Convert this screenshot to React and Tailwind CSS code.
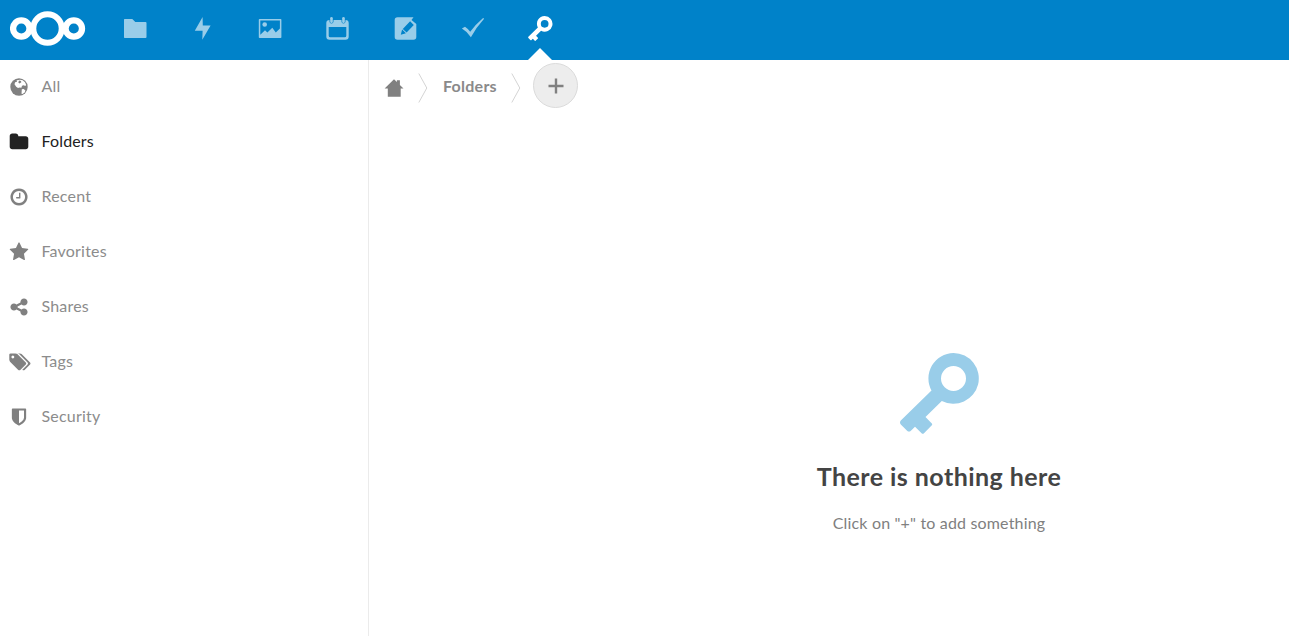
import React, { useState } from "react";

// Top bar icons, drawn on a 24x24 grid
const FolderIcon = () => (
  <svg viewBox="0 0 24 24" className="size-6" fill="currentColor">
    <path d="M1.5 3h7.8l3 3H22.600q.9 0 .9.9V21.100q0 .9-.9.9H1.500q-.5 0-.5-.9V3.900q0-.9.5-.9z" />
  </svg>
);

const BoltIcon = () => (
  <svg viewBox="0 0 24 24" className="size-6" fill="currentColor">
    <path d="M11.600 1 3.800 14.800h7.800l-.3 9 8.300-14.300h-7.800z" />
  </svg>
);

const PhotoIcon = () => (
  <svg viewBox="0 0 24 24" className="size-6" fill="currentColor">
    <path
      fillRule="evenodd"
      d="M1.600 3h21q.8 0 .8.8v17.400q0 .8-.8.8h-21q-.8 0-.8-.8V3.800q0-.8.8-.8zM2.300 4.500v14.300l4.700-4.600 2.400 2.300 4.900-4.700 3.500 4.600 4.100-4V4.500z"
    />
    <circle cx="6.700" cy="8.500" r="2.300" />
  </svg>
);

const CalendarIcon = () => (
  <svg viewBox="0 0 24 24" className="size-6" fill="currentColor">
    <path
      fillRule="evenodd"
      d="M3.500 4v1.500a2 2 0 0 0 4 0V4h8v1.500a2 2 0 0 0 4 0V4q3.200 0 3.200 3v13.500q0 3.300-3.200 3.300h-16q-3.200 0-3.200-3.300V7q0-3 3.200-3zM2.700 11v8.700q0 1.600 1.600 1.600h14.400q1.600 0 1.600-1.600V11z"
    />
    <rect x="4.200" y="1" width="2.600" height="6" rx="1.300" />
    <rect x="16.200" y="1" width="2.600" height="6" rx="1.300" />
  </svg>
);

const NotesIcon = () => (
  <svg viewBox="0 0 24 24" className="size-6" fill="currentColor">
    <path
      fillRule="evenodd"
      d="M4.500 1.200h16L18.500 4l4.800 4V21q0 2.800-2.800 2.800h-16q-2.800 0-2.800-2.800V4q0-2.800 2.800-2.800zM17.100 5.300l-7.300 7.600 3.800 3.600 7.200-7.600zM9.100 13.600l-1.300 5.200 5.100-1.600z"
    />
  </svg>
);

const CheckIcon = () => (
  <svg viewBox="0 0 24 24" className="size-6" fill="currentColor">
    <path d="M.9 12.600 4 10.800q3.100 2.100 5.200 5 5.500-7.500 12.900-13.800l1 .7Q15 11.600 9.900 21.200q-3.800-5.600-9-8.600z" />
  </svg>
);

const KeyIcon = ({ className }) => (
  <svg viewBox="0 0 80 81" className={className} fill="currentColor">
    <path
      fillRule="evenodd"
      d="M53.500 0a25.400 25.400 0 1 1-11.700 48L25.500 64l6.100 6.200q1.200 1.200 0 2.400L24 80.200q-1.200 1.100-2.400 0L15 73.700l-4.100 4q-1.900 1.700-3.800 0L.8 71.400q-1.600-1.900 0-3.800L31.500 37.500A25.400 25.400 0 0 1 53.500 0zm0 13a12.500 12.500 0 1 0 0 25 12.500 12.500 0 0 0 0-25z"
    />
  </svg>
);

const Logo = () => (
  <svg viewBox="0 0 76 36" className="h-9 w-[76px]" fill="none" stroke="white">
    <circle cx="37.500" cy="18.500" r="14.200" strokeWidth="6" />
    <circle cx="11.300" cy="18.500" r="8.200" strokeWidth="6.300" />
    <circle cx="63.800" cy="18.500" r="8.200" strokeWidth="6.300" />
  </svg>
);

// Sidebar icons, drawn on a 1792 grid
const sidebarPaths = {
  Folders:
    "M1728 608v704q0 92-66 158t-158 66h-1216q-92 0-158-66t-66-158v-960q0-92 66-158t158-66h320q92 0 158 66t66 158v32h672q92 0 158 66t66 158z",
  Recent:
    "M1024 544v448q0 14-9 23t-23 9h-320q-14 0-23-9t-9-23v-64q0-14 9-23t23-9h224v-352q0-14 9-23t23-9h64q14 0 23 9t9 23zm416 352q0-148-73-273t-198-198-273-73-273 73-198 198-73 273 73 273 198 198 273 73 273-73 198-198 73-273zm224 0q0 209-103 385.5t-279.5 279.5-385.5 103-385.5-103-279.5-279.5-103-385.5 103-385.5 279.5-279.5 385.5-103 385.5 103 279.5 279.5 103 385.5z",
  Favorites:
    "M1728 647q0 22-26 48l-363 354 86 500q1 7 1 20 0 21-10.5 35.5t-30.5 14.5q-19 0-40-12l-449-236-449 236q-22 12-40 12-21 0-31.5-14.5t-10.5-35.5q0-6 2-20l86-500-364-354q-25-27-25-48 0-37 56-46l502-73 225-455q19-41 49-41t49 41l225 455 502 73q56 9 56 46z",
  Shares:
    "M1344 1024q133 0 226.5 93.5t93.5 226.5-93.5 226.5-226.5 93.5-226.5-93.5-93.5-226.5q0-12 2-34l-360-180q-92 86-218 86-133 0-226.5-93.5t-93.5-226.5 93.5-226.5 226.5-93.5q126 0 218 86l360-180q-2-22-2-34 0-133 93.5-226.5t226.5-93.5 226.5 93.5 93.5 226.5-93.5 226.5-226.5 93.5q-126 0-218-86l-360 180q2 22 2 34t-2 34l360 180q92-86 218-86z",
  Tags: "M448 448q0-53-37.500-90.500t-90.500-37.500-90.500 37.500-37.500 90.500 37.500 90.500 90.500 37.500 90.500-37.500 37.500-90.500zm1067 576q0 53-37 90l-491 492q-39 37-91 37-53 0-90-37l-715-716q-38-37-64.500-101t-26.500-117v-416q0-52 38-90t90-38h416q53 0 117 26.500t102 64.500l715 714q37 39 37 91zm384 0q0 53-37 90l-491 492q-39 37-91 37-36 0-59-14t-53-45l470-470q37-37 37-90 0-52-37-91l-715-714q-38-38-102-64.500t-117-26.500h224q53 0 117 26.500t102 64.500l715 714q37 39 37 91z",
  Security:
    "M1344 960v-640h-448v1137q119-63 213-137 235-184 235-360zm192-768v768q0 86-33.5 170.5t-83 150-118 127.5-126.5 103-121 77.5-89.5 49.5-42.5 20q-12 6-26 6t-26-6q-16-7-42.5-20t-89.5-49.5-121-77.5-126.5-103-118-127.5-83-150-33.5-170.5v-768q0-26 19-45t45-19h1152q26 0 45 19t19 45z",
};

const SidebarIcon = ({ name }) => {
  if (name === "All") {
    return (
      <svg viewBox="0 0 20 20" className="size-5">
        <circle cx="10" cy="10" r="8.700" fill="currentColor" />
        <path
          fill="white"
          d="M8 3.200 11 2.700l2.600.6 2.400 2 1.200 2.700-1 1-1.500-.7-1.700.5-.6 2-1.700-.3-1.700.6-1.800-1.400-1.700-2.500.6-1.900 2-.6-.6-1zM12.800 12.300l1.800-.2 1.800 1.300-.7 2-2.200 1.500-1-.2z"
        />
        <path fill="currentColor" d="m10 3.600 2 .3.300 1.300-1.700 1.400L9.300 5.500z" />
      </svg>
    );
  }
  if (name === "Tags") {
    return (
      <svg viewBox="0 0 1920 1792" className="h-5 w-[22px] shrink-0" fill="currentColor">
        <path d={sidebarPaths.Tags} />
      </svg>
    );
  }
  return (
    <svg viewBox="0 0 1792 1792" className="size-5" fill="currentColor">
      <path d={sidebarPaths[name]} />
    </svg>
  );
};

const HomeIcon = () => (
  <svg viewBox="0 0 20 20" className="size-5" fill="currentColor">
    <path d="M10 1.200 12.900 4V2.300h3v4.600l3.600 3.600h-2.800v8.200H3.800v-8.200H.6z" />
  </svg>
);

const Separator = () => (
  <svg viewBox="0 0 10 30" className="h-[30px] w-2.5" fill="none" stroke="#d4d4d4">
    <path d="M.8.500 8.800 15 .8 29.500" />
  </svg>
);

const apps = [
  { id: "files", icon: <FolderIcon /> },
  { id: "activity", icon: <BoltIcon /> },
  { id: "photos", icon: <PhotoIcon /> },
  { id: "calendar", icon: <CalendarIcon /> },
  { id: "notes", icon: <NotesIcon /> },
  { id: "tasks", icon: <CheckIcon /> },
  { id: "passwords", icon: <KeyIcon className="h-[25px] w-[25px]" /> },
];

const sections = ["All", "Folders", "Recent", "Favorites", "Shares", "Tags", "Security"];

const App = () => {
  const [active, setActive] = useState("Folders");

  return (
    <div className="flex h-screen flex-col overflow-hidden bg-white font-['Lato',sans-serif] text-[#808080]">
      <header className="flex h-15 shrink-0 items-center bg-[#0082c9] pl-[9.5px]">
        <div className="-mt-1 w-[91.750px]">
          <Logo />
        </div>
        <nav className="flex h-full">
          {apps.map((app) => (
            <button
              key={app.id}
              className={
                app.id === "passwords"
                  ? "relative flex w-[67.5px] justify-center pt-4 text-white"
                  : "flex w-[67.5px] justify-center pt-4 text-[#99cde9]"
              }
            >
              {app.icon}
              {app.id === "passwords" && (
                <span className="absolute bottom-0 left-[21.500px] border-x-[12.500px] border-b-[12.500px] border-x-transparent border-b-white" />
              )}
            </button>
          ))}
        </nav>
      </header>

      <div className="flex min-h-0 flex-1">
        <aside className="w-[369px] shrink-0 border-r border-[#ebebeb]">
          <div className="-mt-px">
            {sections.map((name) => (
              <button
                key={name}
                onClick={() => setActive(name)}
                className={
                  name === active
                    ? "flex h-[55px] w-full items-center text-[#222]"
                    : "flex h-[55px] w-full items-center"
                }
              >
                <span className="flex w-[41.500px] justify-start pl-[9px]">
                  <SidebarIcon name={name} />
                </span>
                <span
                  className={
                    name === active
                      ? "-mt-0.5 text-base tracking-[0.15px]"
                      : "-mt-0.5 text-base tracking-[0.2px] text-[#8c8c8c]"
                  }
                >
                  {name}
                </span>
              </button>
            ))}
          </div>
        </aside>

        <main className="flex min-w-0 flex-1 flex-col">
          {/* Breadcrumb */}
          <div className="flex h-14 shrink-0 items-center pl-[15px]">
            <button>
              <HomeIcon />
            </button>
            <span className="ml-3.5">
              <Separator />
            </span>
            <button className="-mt-1 mr-3.5 ml-[15px] w-[54px] text-left text-base font-bold tracking-[0.25px] text-[#8a8a8a]">
              Folders
            </button>
            <Separator />
            <button className="-mt-[5px] ml-3 flex size-[45px] items-center justify-center rounded-full border border-[#dbdbdb] bg-[#ededed]">
              <svg viewBox="0 0 16 16" className="size-4" stroke="currentColor" strokeWidth="2.400">
                <path d="M8 .500v15M.500 8h15" />
              </svg>
            </button>
          </div>

          <div className="flex flex-col items-center pt-[237px] pl-[220px]">
            <KeyIcon className="ml-px h-[81px] w-20 text-[#99cde9]" />
            <h2 className="mt-6 text-[25px] leading-9 font-bold tracking-[0.45px] text-[#444]">
              There is nothing here
            </h2>
            <p className="mt-[17px] text-base leading-6 tracking-[0.17px]">Click on "+" to add something</p>
          </div>
        </main>
      </div>
    </div>
  );
};

export default App;
